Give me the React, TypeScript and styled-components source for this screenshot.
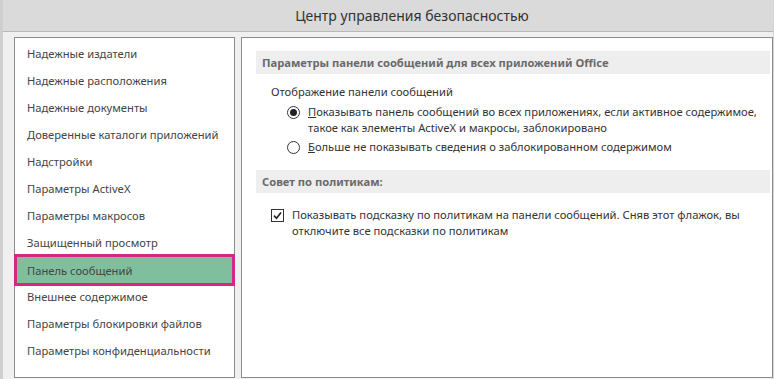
import React from "react";
import styled, { createGlobalStyle } from "styled-components";

const Global = createGlobalStyle`
  html, body { margin: 0; padding: 0; background: #ffffff; }
  body { font-family: "Noto Sans", "Open Sans", sans-serif; }
`;

const Window = styled.div`
  width: 774px;
  height: 379px;
  box-sizing: border-box;
  border-left: 3px solid #cfcfcf;
  border-right: 1px solid #d4d4d4;
  background: #f0f0f0;
  display: flex;
  flex-direction: column;
  overflow: hidden;
  white-space: nowrap;
`;

const TitleBar = styled.div`
  height: 32px;
  flex: none;
  background: #dadada;
  border-bottom: 1px solid #b8b8b8;
  display: flex;
  align-items: center;
  justify-content: center;
  font-size: 14px;
  color: #333333;
  padding-left: 48px;
  box-sizing: border-box;
`;

const Body = styled.div`
  flex: 1;
  display: flex;
  gap: 6px;
  padding: 5px 0 0 11px;
  min-height: 0;
`;

const Panel = styled.div<{ $w?: number }>`
  background: #ffffff;
  border: 1px solid #8c8c8c;
  box-sizing: border-box;
  height: 341px;
  ${(p) => (p.$w ? `width: ${p.$w}px; flex: none;` : "flex: 1;")}
`;

const NavList = styled.ul`
  list-style: none;
  margin: 0;
  padding: 2px 0 0 0;
  display: flex;
  flex-direction: column;
`;

const NavItem = styled.li<{ $active?: boolean }>`
  height: 27px;
  display: flex;
  align-items: center;
  padding-left: 13px;
  font-size: 11.2px;
  color: #444444;
  box-sizing: border-box;
  margin: 0 -1px;
  ${(p) =>
    p.$active &&
    `
    background: #80bf9d;
    border: 3px solid #d4278a;
    padding-left: 10px;
    height: 32px;
    margin-top: -2px;
    margin-bottom: -3px;
  `}
`;

const Content = styled.div`
  padding: 13px 2px 0 14px;
`;

const SectionHeader = styled.div`
  height: 23px;
  background: #eeeeee;
  display: flex;
  align-items: center;
  padding-left: 6px;
  font-size: 11.2px;
  font-weight: bold;
  color: #6a6a6a;
`;

const Group = styled.div<{ $top?: number }>`
  padding: ${(p) => p.$top ?? 10}px 0 12px 15px;
  font-size: 11.2px;
  color: #333333;
`;

const GroupLabel = styled.div`
  line-height: 16px;
  margin-bottom: 4px;
`;

const OptionRow = styled.label<{ $indent?: number }>`
  display: flex;
  align-items: flex-start;
  gap: 8px;
  padding-left: ${(p) => p.$indent ?? 16}px;
  line-height: 16px;
  margin-bottom: 3px;
`;

const Radio = styled.span<{ $on?: boolean }>`
  flex: none;
  width: 11px;
  height: 11px;
  margin-top: 2px;
  border: 1px solid #333333;
  border-radius: 50%;
  background: #ffffff;
  display: flex;
  align-items: center;
  justify-content: center;
  &::after {
    content: "";
    width: 7px;
    height: 7px;
    border-radius: 50%;
    background: ${(p) => (p.$on ? "#222222" : "transparent")};
  }
`;

const Check = styled.span`
  flex: none;
  width: 11px;
  height: 11px;
  margin-top: 2px;
  border: 1px solid #333333;
  background: #ffffff;
  display: flex;
  align-items: center;
  justify-content: center;
`;

const U = styled.span`
  text-decoration: underline;
`;

export default function App() {
  const items = [
    "Надежные издатели",
    "Надежные расположения",
    "Надежные документы",
    "Доверенные каталоги приложений",
    "Надстройки",
    "Параметры ActiveX",
    "Параметры макросов",
    "Защищенный просмотр",
    "Панель сообщений",
    "Внешнее содержимое",
    "Параметры блокировки файлов",
    "Параметры конфиденциальности",
  ];
  return (
    <>
      <Global />
      <Window>
        <TitleBar>Центр управления безопасностью</TitleBar>
        <Body>
          <Panel $w={221}>
            <NavList>
              {items.map((t) => (
                <NavItem key={t} $active={t === "Панель сообщений"}>
                  {t}
                </NavItem>
              ))}
            </NavList>
          </Panel>
          <Panel>
            <Content>
              <SectionHeader>Параметры панели сообщений для всех приложений Office</SectionHeader>
              <Group>
                <GroupLabel>Отображение панели сообщений</GroupLabel>
                <OptionRow>
                  <Radio $on />
                  <span>
                    <U>П</U>оказывать панель сообщений во всех приложениях, если активное содержимое,
                    <br />
                    такое как элементы ActiveX и макросы, заблокировано
                  </span>
                </OptionRow>
                <OptionRow>
                  <Radio />
                  <span>
                    <U>Б</U>ольше не показывать сведения о заблокированном содержимом
                  </span>
                </OptionRow>
              </Group>
              <SectionHeader>Совет по политикам:</SectionHeader>
              <Group $top={14}>
                <OptionRow $indent={0}>
                  <Check>
                    <svg width="9" height="9" viewBox="0 0 9 9">
                      <path d="M1 4.6 L3.5 7.2 L8 1.4" fill="none" stroke="#222" strokeWidth="1.6" />
                    </svg>
                  </Check>
                  <span>
                    Показывать подсказку по политикам на панели сообщений. Сняв этот флажок, вы
                    <br />
                    отключите все подсказки по политикам
                  </span>
                </OptionRow>
              </Group>
            </Content>
          </Panel>
        </Body>
      </Window>
    </>
  );
}
